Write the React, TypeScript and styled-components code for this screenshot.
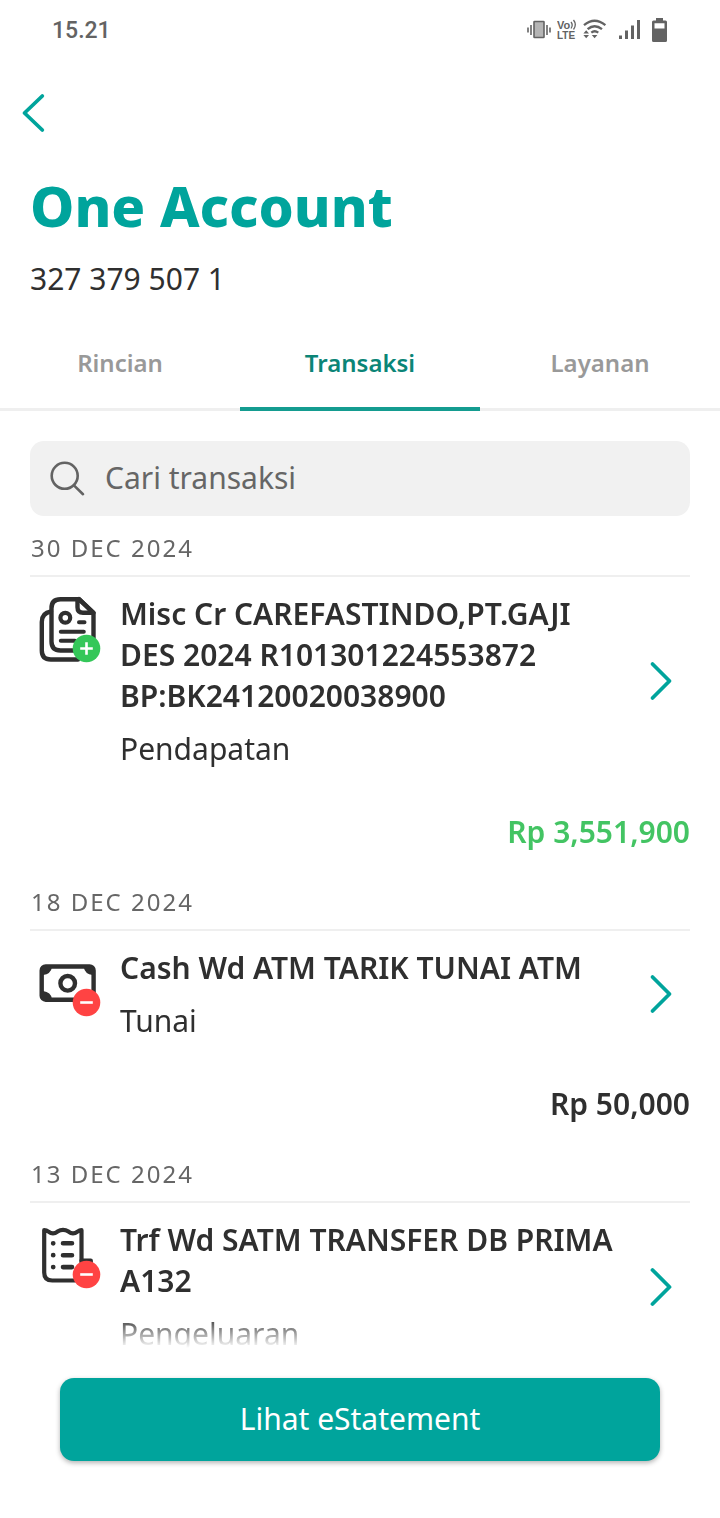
import React from "react";
import styled, { createGlobalStyle } from "styled-components";

const GlobalStyle = createGlobalStyle`
  *, *::before, *::after { box-sizing: border-box; }
  body {
    margin: 0;
    background: #fff;
    color: #2f2f2f;
    font-family: "Noto Sans", "Open Sans", sans-serif;
  }
  button, input { font: inherit; }
  h1, h2, h3, p { margin: 0; }
`;

const Screen = styled.div`
  display: flex;
  flex-direction: column;
  height: 100vh;
  background: #fff;
`;

const StatusBar = styled.div`
  display: flex;
  align-items: center;
  justify-content: space-between;
  height: 60px;
  padding: 0 53px 0 52px;
  color: #636363;
`;

const Clock = styled.time`
  padding-top: 2px;
  font-family: Roboto, sans-serif;
  font-size: 23px;
  line-height: 28px;
  font-weight: 500;
`;

const StatusIcons = styled.div`
  display: flex;
  gap: 6px;
  svg { display: block; }
`;

const TopNav = styled.nav`
  display: flex;
  padding: 33px 20px 0;
`;

const IconButton = styled.button`
  display: grid;
  place-items: center;
  padding: 0;
  border: 0;
  background: none;
  color: #00a49c;
  cursor: pointer;
  svg { display: block; }
`;

const Heading = styled.header`
  display: flex;
  flex-direction: column;
  gap: 15px;
  padding: 34px 30px 0;
`;

const AccountName = styled.h1`
  font-size: 56px;
  line-height: 76px;
  font-weight: 800;
  color: #00a49c;
`;

const AccountNumber = styled.p`
  font-size: 30px;
  line-height: 41px;
`;

const Tabs = styled.div`
  display: grid;
  grid-template-columns: repeat(3, 1fr);
  margin-top: 30px;
  box-shadow: inset 0 -3px #efefef;
`;

const Tab = styled.button<{ $active?: boolean }>`
  padding: 17px 0 28px;
  border: 0;
  border-bottom: 4px solid ${(p) => (p.$active ? "#149c90" : "transparent")};
  background: none;
  font-size: 24px;
  line-height: 33px;
  font-weight: 600;
  color: ${(p) => (p.$active ? "#0b8577" : "#999")};
  cursor: pointer;
`;

const SearchBox = styled.label`
  display: flex;
  align-items: center;
  gap: 19px;
  height: 75px;
  margin: 30px 30px 0;
  padding: 0 20px;
  border-radius: 14px;
  background: #f1f1f1;
  color: #636363;
  flex: none;
  svg { display: block; flex: none; }
`;

const SearchInput = styled.input`
  flex: 1;
  min-width: 0;
  padding: 0 0 2px;
  border: 0;
  outline: 0;
  background: none;
  font-size: 30px;
  line-height: 41px;
  color: #2f2f2f;
  &::placeholder { color: #666; opacity: 1; }
`;

const History = styled.main`
  flex: 1;
  min-height: 0;
  overflow-y: auto;
  padding: 0 30px;
  scrollbar-width: none;
  mask-image: linear-gradient(to bottom, #000 calc(100% - 32px), transparent);
`;

const DateLabel = styled.h2`
  padding: 15px 1px 11px;
  border-bottom: 2px solid #efefef;
  font-size: 24px;
  line-height: 33px;
  font-weight: 400;
  letter-spacing: 2px;
  color: #666;
`;

const Entry = styled.article`
  display: flex;
  flex-direction: column;
  gap: 42px;
  padding: 16px 0 18px;
`;

const EntryRow = styled.div`
  display: grid;
  grid-template-columns: 72px 1fr 28px;
  column-gap: 18px;
  padding-right: 15px;
  svg { display: block; }
`;

const EntryText = styled.div`
  display: flex;
  flex-direction: column;
  gap: 12px;
  font-size: 30px;
  line-height: 41px;
`;

const EntryTitle = styled.h3`
  font-size: inherit;
  font-weight: 600;
`;

const Amount = styled.p<{ $income?: boolean }>`
  text-align: right;
  font-size: 30px;
  line-height: 41px;
  font-weight: 600;
  color: ${(p) => (p.$income ? "#43c463" : "#2f2f2f")};
`;

const Footer = styled.footer`
  padding: 30px 60px 57px;
`;

const PrimaryButton = styled.button`
  display: block;
  width: 100%;
  padding: 20px 0 22px;
  border: 0;
  border-radius: 14px;
  background: #00a49c;
  box-shadow: 0 2px 5px rgba(0, 0, 0, 0.3);
  font-size: 30px;
  line-height: 41px;
  color: #fff;
  cursor: pointer;
`;

const VibrateIcon = () => (
  <svg width="24" height="28" viewBox="0 0 24 28" fill="none" stroke="currentColor" strokeWidth="1.6">
    <rect x="7" y="5.5" width="10" height="16" rx="0.6" fill="#b5b5b5" />
    <path d="M1 11.5v5M4 9v10M20 9v10M23 11.5v5" />
  </svg>
);

const VolteIcon = () => (
  <svg width="20" height="28" viewBox="0 0 20 28" fill="currentColor">
    <text x="0" y="13" fontFamily="Liberation Sans, sans-serif" fontWeight="700" fontSize="11">Vo</text>
    <text x="0" y="23" fontFamily="Liberation Sans, sans-serif" fontWeight="700" fontSize="10">LTE</text>
    <path d="M14 6q2.400 3 0 6.500M16.500 4q3.600 4.500 0 9.500" fill="none" stroke="currentColor" strokeWidth="1.3" />
  </svg>
);

const WifiIcon = () => (
  <svg width="24" height="28" viewBox="0 0 24 28" fill="none" stroke="currentColor" strokeWidth="2.300">
    <path d="M1 9.200Q11.500 0.400 22.400 9.200M4.600 13.200Q11.500 7.200 19 13.200M8.300 16.600Q11.600 14 15.300 16.600" />
    <path d="M3.200 14.300l2.800 3.200H0.400zM3.200 22.300l2.800-3.200H0.400zM11.600 22.300l-2.800-3.200h5.600z" fill="currentColor" stroke="none" />
  </svg>
);

const SignalIcon = () => (
  <svg width="28" height="28" viewBox="0 0 28 28" fill="currentColor">
    <path d="M6 19.500h3V23H6zM12 14.500h3V23h-3zM18 9.500h3V23h-3zM24 4h3v19h-3z" />
  </svg>
);

const BatteryIcon = () => (
  <svg width="20" height="28" viewBox="0 0 20 28" fill="currentColor">
    <path fillRule="evenodd" d="M9 2h7v2.500h2.500q1.500 0 1.500 1.500v18.500q0 1.500-1.500 1.500h-12Q5 26 5 24.500V6q0-1.500 1.500-1.500H9zM7.500 7.200v5.300h10V7.200z" />
  </svg>
);

const BackIcon = () => (
  <svg width="28" height="40" viewBox="0 0 28 40" fill="none" stroke="currentColor" strokeWidth="3.800" strokeLinecap="round" strokeLinejoin="round">
    <path d="M22.300 3L4.500 20l17.800 17" />
  </svg>
);

const ForwardIcon = () => (
  <svg width="28" height="40" viewBox="0 0 28 40" fill="none" stroke="currentColor" strokeWidth="3.800" strokeLinecap="round" strokeLinejoin="round">
    <path d="M5.500 3L22.500 20 5.500 37" />
  </svg>
);

const SearchIcon = () => (
  <svg width="36" height="36" viewBox="0 0 36 36" fill="none" stroke="currentColor" strokeWidth="2.600" strokeLinecap="round" aria-hidden="true">
    <circle cx="14.700" cy="14.800" r="13" />
    <path d="M24.200 24.600L33 33.200" />
  </svg>
);

const PlusBadge = () => (
  <g>
    <circle cx="56.500" cy="54.500" r="13.800" fill="#34c759" stroke="none" />
    <path d="M56.500 48.200v12.600M50.200 54.500h12.600" stroke="#fff" strokeWidth="2.600" strokeLinecap="butt" />
  </g>
);

const MinusBadge = () => (
  <g>
    <circle cx="56.500" cy="54.500" r="13.800" fill="#ff4343" stroke="none" />
    <path d="M50.200 54.500h12.600" stroke="#fff" strokeWidth="2.600" strokeLinecap="butt" />
  </g>
);

const IncomeIcon = () => (
  <svg width="72" height="72" viewBox="0 -1 72 72" fill="none" stroke="#2f2f2f" strokeWidth="4.400" strokeLinecap="round" strokeLinejoin="round">
    <path d="M21 17.500Q11.800 19 11.800 28v28.500q0 9 9 9H48" />
    <path d="M63.500 44V18.800L49 5.200H30.500q-9 0-9 9v33.300q0 9 9 9H48" />
    <path d="M49 5.200L63.500 18.800H53q-5.500 0-5.500-5.500V5.500" />
    <circle cx="35.300" cy="23.700" r="4.900" strokeWidth="4.200" />
    <path d="M49 28.300h5.500M30.800 37.800h23M30.800 46.800H45" strokeWidth="4" />
    <PlusBadge />
  </svg>
);

const CashIcon = () => (
  <svg width="72" height="72" viewBox="0 -1 72 72" fill="none" stroke="#2f2f2f" strokeWidth="4.400">
    <rect x="11.700" y="18.500" width="51.900" height="33.200" rx="4" />
    <path d="M13 19h9q-1 7-9 8zM62.700 19h-9q1 7 9 8zM13 51h9q-1-7-9-8z" fill="#2f2f2f" stroke="none" />
    <circle cx="37.700" cy="35.300" r="7.300" />
    <MinusBadge />
  </svg>
);

const ReceiptIcon = () => (
  <svg width="72" height="72" viewBox="0 -1 72 72" fill="none" stroke="#2f2f2f" strokeWidth="4.200" strokeLinecap="round" strokeLinejoin="round">
    <path d="M51.500 50V10.200q-2 0-4 1.400-4.500 3.600-9 0-5.500-3.600-11 0-4.500 3.600-9 0-2-1.400-4.300-1.400V52.500q0 8 8 8H45" />
    <path d="M51.500 40.500h9.300V48" />
    <path d="M33 23.300h9M33 35.200h9M33 47.100h9" strokeWidth="4.600" />
    <path d="M23.200 23.300h0M23.200 35.200h0M23.200 47.100h0" strokeWidth="4.800" />
    <MinusBadge />
  </svg>
);

type Transaction = {
  date: string;
  title: string;
  category: string;
  icon: React.ReactNode;
  amount?: string;
  income?: boolean;
};

const transactions: Transaction[] = [
  {
    date: "30 DEC 2024",
    title: "Misc Cr CAREFASTINDO,PT.GAJI DES 2024 R101301224553872 BP:BK24120020038900",
    category: "Pendapatan",
    icon: <IncomeIcon />,
    amount: "Rp 3,551,900",
    income: true,
  },
  {
    date: "18 DEC 2024",
    title: "Cash Wd ATM TARIK TUNAI ATM",
    category: "Tunai",
    icon: <CashIcon />,
    amount: "Rp 50,000",
  },
  {
    date: "13 DEC 2024",
    title: "Trf Wd SATM TRANSFER DB PRIMA A132",
    category: "Pengeluaran",
    icon: <ReceiptIcon />,
  },
];

export default function App() {
  return (
    <Screen>
      <GlobalStyle />
      <StatusBar>
        <Clock>15.21</Clock>
        <StatusIcons>
          <VibrateIcon />
          <VolteIcon />
          <WifiIcon />
          <SignalIcon />
          <BatteryIcon />
        </StatusIcons>
      </StatusBar>
      <TopNav>
        <IconButton type="button" aria-label="Kembali">
          <BackIcon />
        </IconButton>
      </TopNav>
      <Heading>
        <AccountName>One Account</AccountName>
        <AccountNumber>327 379 507 1</AccountNumber>
      </Heading>
      <Tabs role="tablist">
        <Tab type="button" role="tab" aria-selected={false}>Rincian</Tab>
        <Tab type="button" role="tab" aria-selected $active>Transaksi</Tab>
        <Tab type="button" role="tab" aria-selected={false}>Layanan</Tab>
      </Tabs>
      <SearchBox>
        <SearchIcon />
        <SearchInput type="search" placeholder="Cari transaksi" aria-label="Cari transaksi" />
      </SearchBox>
      <History>
        {transactions.map((t) => (
          <section key={t.date}>
            <DateLabel>{t.date}</DateLabel>
            <Entry>
              <EntryRow>
                {t.icon}
                <EntryText>
                  <EntryTitle>{t.title}</EntryTitle>
                  <p>{t.category}</p>
                </EntryText>
                <IconButton type="button" aria-label={`Detail ${t.title}`}>
                  <ForwardIcon />
                </IconButton>
              </EntryRow>
              {t.amount && <Amount $income={t.income}>{t.amount}</Amount>}
            </Entry>
          </section>
        ))}
      </History>
      <Footer>
        <PrimaryButton type="button">Lihat eStatement</PrimaryButton>
      </Footer>
    </Screen>
  );
}
